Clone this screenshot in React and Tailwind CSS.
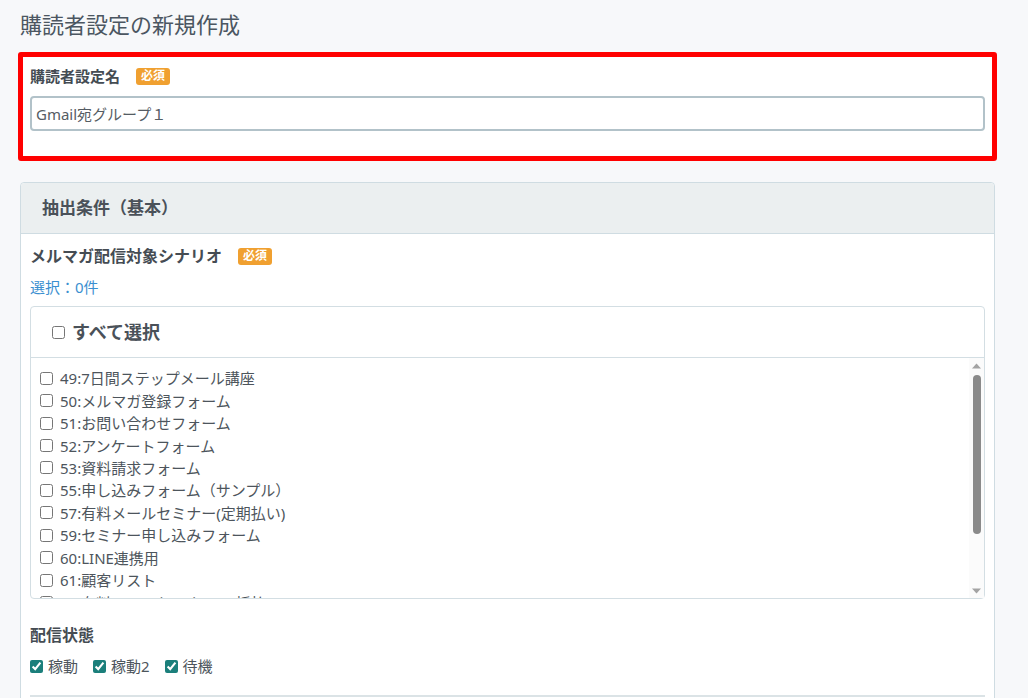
import React, { useState } from "react";

const scenarios = [
  "49:7日間ステップメール講座",
  "50:メルマガ登録フォーム",
  "51:お問い合わせフォーム",
  "52:アンケートフォーム",
  "53:資料請求フォーム",
  "55:申し込みフォーム（サンプル）",
  "57:有料メールセミナー(定期払い)",
  "59:セミナー申し込みフォーム",
  "60:LINE連携用",
  "61:顧客リスト",
  "62:有料メールセミナー(一括払い)",
  "63:無料相談申し込み",
  "64:キャンペーン応募フォーム",
];

const statuses = ["稼動", "稼動2", "待機"];

const Badge = () => (
  <span className="ml-4 inline-flex h-[17px] items-center rounded-[3px] bg-[#f0a030] px-[5px] text-[12px] font-bold leading-none text-white">
    必須
  </span>
);

export default function App() {
  const [name, setName] = useState("Gmail宛グループ１");
  const [checked, setChecked] = useState({});
  const [status, setStatus] = useState({ 稼動: true, 稼動2: true, 待機: true });

  const count = Object.values(checked).filter(Boolean).length;

  return (
    <div
      className="h-[698px] overflow-hidden bg-[#f7f8fa] pl-5 pr-[33px] text-[#474f57]"
      style={{ fontFamily: '"Noto Sans", "Noto Sans CJK JP", sans-serif' }}
    >
      <h1 className="pt-[8px] text-[22px] leading-[32px] text-[#4b5661]">購読者設定の新規作成</h1>

      <div className="-mx-[2px] mt-[12px] h-[109px] rounded-[3px] border-[5px] border-[#ff0000] bg-white px-[7px] pt-[8px]">
        <div className="flex h-[22px] items-center">
          <span className="text-[15px] font-bold leading-[22px] text-[#454c53]">購読者設定名</span>
          <Badge />
        </div>
        <input
          value={name}
          onChange={(e) => setName(e.target.value)}
          className="mt-[9px] h-[35px] w-full rounded-[4px] border-2 border-[#b2c2c9] px-[4px] text-[15px] text-[#555c63] outline-none"
        />
      </div>

      <div className="mt-[21px] rounded-[4px] border border-[#cfdce2] bg-white">
        <div className="flex h-[51px] items-center rounded-t-[4px] border-b border-[#cfdce2] bg-[#ebeff0] pl-[21px]">
          <span className="text-[17px] font-bold text-[#4a5159]">抽出条件（基本）</span>
        </div>

        <div className="px-[9px] pt-[11px]">
          <div className="flex h-[22px] items-center">
            <span className="text-[16px] font-bold leading-[22px] text-[#454c53]">メルマガ配信対象シナリオ</span>
            <Badge />
          </div>
          <div className="mt-[9px] text-[15px] leading-[22px] text-[#3a8fd0]">選択：{count}件</div>

          <div className="mt-[8px] rounded-[4px] border border-[#d3dee3]">
            <label className="flex h-[51px] items-center border-b border-[#d3dee3] pl-[21px]">
              <input
                type="checkbox"
                className="m-0 h-[13px] w-[13px]"
                checked={count === scenarios.length}
                onChange={(e) => {
                  const next = {};
                  scenarios.forEach((s) => (next[s] = e.target.checked));
                  setChecked(next);
                }}
              />
              <span className="ml-[7px] text-[18px] font-bold leading-[26px] text-[#4a5159]">すべて選択</span>
            </label>
            <div className="flex h-[240px]">
              <div className="flex-1 overflow-hidden pl-[9px] pt-[9px]">
                {scenarios.map((s) => (
                  <label key={s} className="flex h-[22.45px] items-center">
                    <input
                      type="checkbox"
                      className="m-0 h-[13px] w-[13px]"
                      checked={!!checked[s]}
                      onChange={(e) => setChecked({ ...checked, [s]: e.target.checked })}
                    />
                    <span className="ml-[7px] text-[15px] leading-[20px] text-[#4d555c]">{s}</span>
                  </label>
                ))}
              </div>
              {/* scrollbar */}
              <div className="flex w-[15px] flex-col items-center bg-[#fbfbfb] pt-[4px] pb-[4px]">
                <svg width="9" height="6" viewBox="0 0 9 6" className="mt-[1px]">
                  <path d="M4.5 0.5L9 5.5H0Z" fill="#a3a3a3" />
                </svg>
                <div className="mt-[6px] h-[159px] w-[8px] rounded-full bg-[#8a8a8a]" />
                <div className="flex-1" />
                <svg width="9" height="6" viewBox="0 0 9 6">
                  <path d="M0 0.5H9L4.5 5.5Z" fill="#a3a3a3" />
                </svg>
              </div>
            </div>
          </div>

          <div className="mt-[25px] text-[16px] font-bold leading-[22px] text-[#454c53]">配信状態</div>
          <div className="mt-[9px] flex h-[22px] items-center">
            {statuses.map((s) => (
              <label key={s} className="mr-[15px] flex items-center">
                <input
                  type="checkbox"
                  className="m-0 h-[13px] w-[13px] accent-[#1b7f7b]"
                  checked={!!status[s]}
                  onChange={(e) => setStatus({ ...status, [s]: e.target.checked })}
                />
                <span className="ml-[5px] text-[15px] leading-[20px] text-[#4d555c]">{s}</span>
              </label>
            ))}
          </div>
          <div className="mt-[18px] border-t-2 border-[#dbe3e6]" />
          <div className="h-[40px]" />
        </div>
      </div>
    </div>
  );
}
